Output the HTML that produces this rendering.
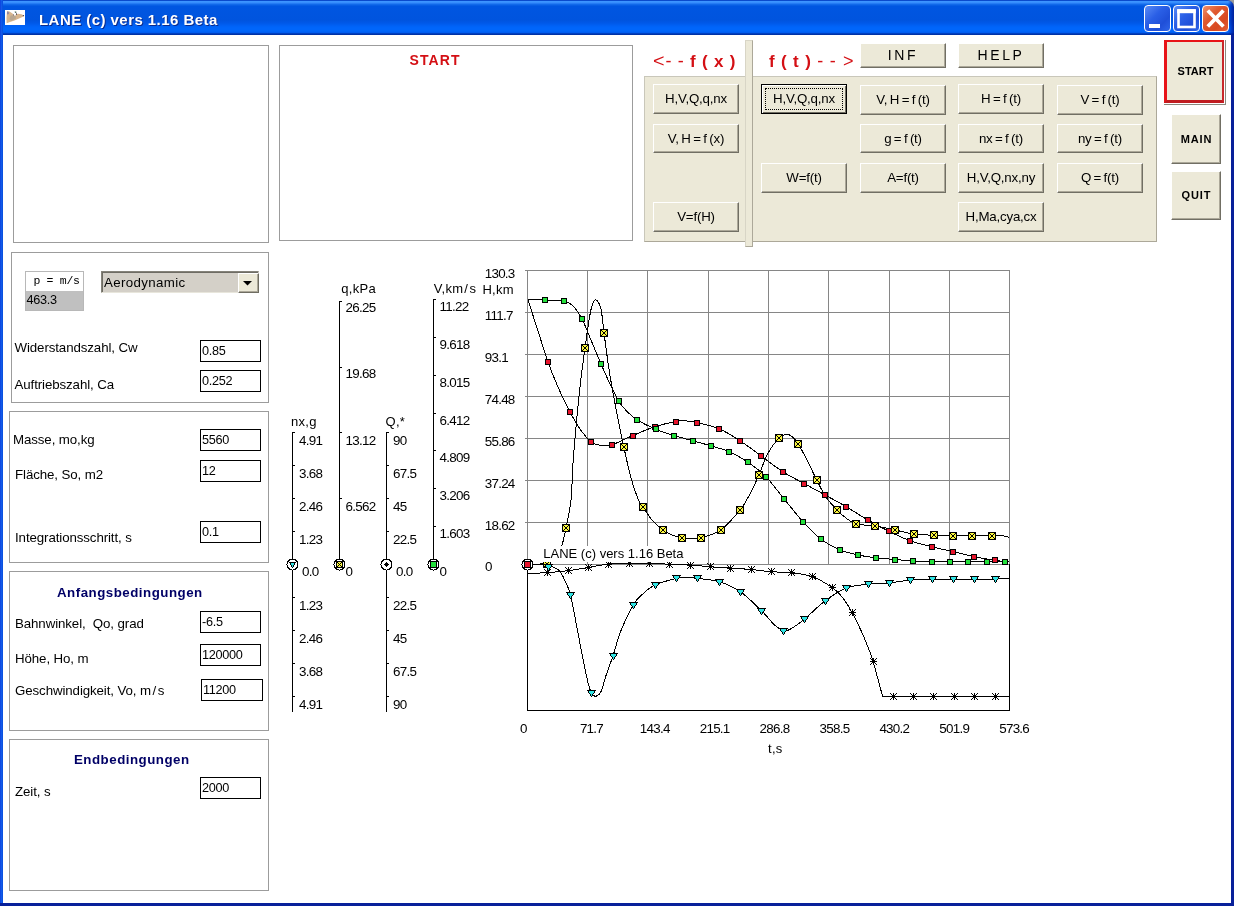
<!DOCTYPE html>
<html><head><meta charset="utf-8"><title>LANE</title>
<style>
html,body{margin:0;padding:0}
body{width:1234px;height:906px;position:relative;overflow:hidden;background:#fff;font-family:"Liberation Sans",sans-serif;font-size:13px;color:#000}
div{position:absolute;box-sizing:border-box;white-space:nowrap}
#frame{left:0;top:0;width:1234px;height:906px;background:#08209a}
#frameL{left:0;top:0;width:3px;height:903px;background:linear-gradient(90deg,#0831d9 0,#1660ea 1px,#0d55e4 2px,#0a4cdc 3px)}
#client{left:3px;top:35px;width:1228px;height:868px;background:#fff}
#title{left:0;top:0;width:1234px;height:35px;border-radius:0 7px 0 0;background:linear-gradient(90deg,rgba(0,20,150,0) 1228px,rgba(0,20,150,.6) 1232px,rgba(0,16,130,.75) 1234px),linear-gradient(180deg,#0a4acc 0,#0a4acc 1px,#3c94ff 1px,#3c94ff 2px,#3288fa 3px,#1870ee 4px,#0a62e6 5px,#0056e1 6.5px,#0054de 20px,#0058e8 23px,#0062f6 26px,#0066fb 28px,#0066fb 31px,#005cf0 32.5px,#0040c0 33.5px,#002a9a 35px)}
#ttext{left:39px;top:9px;color:#fff;font-weight:bold;font-size:15px;line-height:22px;letter-spacing:0.45px;text-shadow:1px 1px 0 #0a2a8c}
#icon{left:5px;top:10px;width:20px;height:15px;background:#fff}
.cb{top:5px;width:27px;height:27px;border:1px solid #fff;border-radius:4px;background:linear-gradient(135deg,#5b8cf5 0,#2a5fe6 40%,#1f4fd8 70%,#2f66ea 100%)}
.pnl{border:1px solid #9c9c9c;background:#fff}
.gp{background:#ece9d8;border:1px solid #c9c7ba;border-right-color:#aca899;border-bottom-color:#aca899}
.b{background:#ece9d8;border:1px solid #fff;border-right:1px solid #716f64;border-bottom:1px solid #716f64;text-align:center;font-size:13.3px;letter-spacing:-0.2px;word-spacing:-1px;box-shadow:inset -1px -1px 0 #aca899}
.sp{letter-spacing:2.6px;font-size:14px}
.rb{background:#ece9d8;border:1px solid #fff;border-right:1px solid #716f64;border-bottom:1px solid #716f64;text-align:center;font-weight:bold;font-size:11px;letter-spacing:0.9px;padding-left:1px;box-shadow:inset -1px -1px 0 #aca899}
.hd{color:#d40f14;font-size:18px;letter-spacing:5.2px;line-height:20px}
.hd b{font-weight:bold;font-size:17px}
.hd i{font-style:normal;display:inline-block;width:12.5px;letter-spacing:0;transform:scaleX(1.1);transform-origin:0 50%}
.hd u{text-decoration:none;display:inline-block;margin-left:1px}
.l{font-size:13.3px;line-height:15px;letter-spacing:-0.1px}
.in{border:1px solid #000;background:#fff;width:61px;height:22px;font-size:12.7px;line-height:15px;letter-spacing:-0.3px;padding:3px 0 0 1px}
.h2{font-weight:bold;color:#000066;font-size:13.3px;line-height:15px;letter-spacing:0.5px}
.ct{font-size:13.4px;line-height:15px;letter-spacing:-0.72px}
.cap{font-size:13px;line-height:15px}
.tl{font-size:13px;line-height:15px;letter-spacing:0.3px}
</style></head><body>
<div id="wrap" style="left:0;top:0;width:1234px;height:906px;will-change:transform">
<div id="frame"></div>
<div style="left:1224px;top:0;width:10px;height:10px;background:#9a9a9a"></div>
<div id="title"></div>
<div id="frameL"></div>
<div id="client"></div>
<div id="icon"><svg width="20" height="15" viewBox="0 0 20 15"><defs><filter id="bl" x="-10%" y="-10%" width="120%" height="120%"><feGaussianBlur stdDeviation="0.45"/></filter></defs><g filter="url(#bl)"><path d="M2 1.2L4.5 1.6 7.5 3.6 8.6 5 11 4.6 13 3.8 16.5 4.2 19 5.4 18.6 6.6 14 8.4 9.5 10.4 5 12 1.6 13.2 1.5 8z" fill="#d8b68e"/><path d="M5.5 5.5L10.5 5.2 11 8.5 6 11 4.5 9z" fill="#b9a790"/><path d="M2 1.4l1.6.3.4 2.2-2 .6z" fill="#8f86a6"/><path d="M8.6 3.2l2-.2.3 2.4-2.2.2z" fill="#fff"/><path d="M9.6 1.6l1.6-.2.4 1-1.6.5z" fill="#4c6a52"/><path d="M11 3.2l.9.1.1 1.5-.9.1z" fill="#4a3c48"/><path d="M8 4.2l.7 0 .1 1.2-.8 0z" fill="#5a4a52"/><circle cx="18.4" cy="5.6" r=".7" fill="#3e3a52"/></g></svg></div>
<div id="ttext">LANE (c) vers 1.16 Beta</div>
<div class="cb" style="left:1144px"><svg width="25" height="25"><rect x="4" y="18" width="11" height="4" fill="#fff"/></svg></div>
<div class="cb" style="left:1173px"><svg width="25" height="25"><rect x="4.5" y="4.5" width="16" height="16.5" fill="none" stroke="#fff" stroke-width="2.6"/><rect x="3.2" y="3.2" width="18.6" height="4" fill="#fff"/></svg></div>
<div class="cb" style="left:1202px;background:linear-gradient(135deg,#f0906a 0,#e05a30 35%,#d84820 70%,#e2603a 100%)"><svg width="25" height="25"><path d="M4.8 4.5l15.6 16M20.4 4.5l-15.6 16" stroke="#fff" stroke-width="3.8" fill="none"/></svg></div>

<!-- top panels -->
<div class="pnl" style="left:13px;top:45px;width:256px;height:198px"></div>
<div class="pnl" style="left:279px;top:45px;width:354px;height:196px"></div>
<div style="left:279px;top:52px;width:312px;text-align:center;color:#d40f14;font-weight:bold;font-size:14px;line-height:16px;letter-spacing:1.1px">START</div>

<!-- button panel -->
<div class="gp" style="left:644px;top:76px;width:513px;height:166px"></div>
<div style="left:745px;top:40px;width:8px;height:207px;background:#ece9d8;border:1px solid #d8d5c6;border-right-color:#aca899;border-bottom-color:#aca899"></div>
<div class="hd" style="left:653px;top:51px;letter-spacing:6.3px"><i>&lt;</i>--<b>f(x)</b></div>
<div class="hd" style="left:769px;top:51px;letter-spacing:6.4px"><b>f(t)</b>--<u>&gt;</u></div>
<div class="b" style="left:653px;top:84px;width:86px;height:30px;line-height:28px">H,V,Q,q,nx</div>
<div class="b" style="left:653px;top:124px;width:86px;height:29px;line-height:27px">V, H = f (x)</div>
<div class="b" style="left:653px;top:202px;width:86px;height:30px;line-height:28px">V=f(H)</div>
<div class="b" style="left:860px;top:85px;width:86px;height:30px;line-height:28px">V, H = f (t)</div>
<div class="b" style="left:958px;top:84px;width:86px;height:30px;line-height:28px">H = f (t)</div>
<div class="b" style="left:1057px;top:85px;width:86px;height:30px;line-height:28px">V = f (t)</div>
<div class="b" style="left:860px;top:124px;width:86px;height:29px;line-height:27px">g = f (t)</div>
<div class="b" style="left:958px;top:124px;width:86px;height:29px;line-height:27px">nx = f (t)</div>
<div class="b" style="left:1057px;top:124px;width:86px;height:29px;line-height:27px">ny = f (t)</div>
<div class="b" style="left:761px;top:163px;width:86px;height:30px;line-height:28px">W=f(t)</div>
<div class="b" style="left:860px;top:163px;width:86px;height:30px;line-height:28px">A=f(t)</div>
<div class="b" style="left:958px;top:163px;width:86px;height:30px;line-height:28px">H,V,Q,nx,ny</div>
<div class="b" style="left:1057px;top:163px;width:86px;height:30px;line-height:28px">Q = f(t)</div>
<div class="b" style="left:958px;top:202px;width:86px;height:30px;line-height:28px">H,Ma,cya,cx</div>
<div class="b sp" style="left:860px;top:43px;width:86px;height:25px;line-height:23px">INF</div>
<div class="b sp" style="left:958px;top:43px;width:86px;height:25px;line-height:23px">HELP</div>
<div class="b" style="left:761px;top:84px;width:86px;height:30px;line-height:27px;border:1px solid #000;box-shadow:inset 1px 1px 0 #fff,inset -1px -1px 0 #6f6d62;outline:0">H,V,Q,q,nx<div style="left:3px;top:3px;width:78px;height:22px;border:1px dotted #000"></div></div>

<!-- right buttons -->
<div style="left:1164px;top:40px;width:62px;height:65px;border-right:1px solid #8a887c;border-bottom:1px solid #8a887c"></div>
<div style="left:1164px;top:40px;width:60px;height:63px;background:#ece9d8;border:solid #e81418;border-width:2px 2px 3px 3px;border-right-color:#c8282a;border-bottom-color:#c01c20;text-align:center;font-weight:bold;font-size:11px;letter-spacing:0;padding-left:2px;line-height:59px">START</div>
<div class="rb" style="left:1171px;top:114px;width:50px;height:50px;line-height:48px">MAIN</div>
<div class="rb" style="left:1171px;top:171px;width:50px;height:49px;line-height:47px">QUIT</div>

<!-- left panels -->
<div class="pnl" style="left:11px;top:252px;width:258px;height:151px"></div>
<div class="pnl" style="left:9px;top:411px;width:260px;height:152px"></div>
<div class="pnl" style="left:9px;top:571px;width:260px;height:160px"></div>
<div class="pnl" style="left:9px;top:739px;width:260px;height:152px"></div>

<div style="left:25px;top:271px;width:59px;height:40px;border:1px solid #b8b8b8;background:#fff"></div>
<div style="left:26px;top:291px;width:57px;height:19px;background:#c0c0c0"></div>
<div style="left:26px;top:274px;width:57px;text-align:center;font-family:'Liberation Mono',monospace;font-size:11.5px;line-height:14px;letter-spacing:-0.3px;padding-left:4px">p = m/s</div>
<div style="left:26.5px;top:293px;font-size:12.7px;line-height:15px;letter-spacing:-0.3px">463.3</div>

<div style="left:101px;top:271px;width:158px;height:22px;background:#d4d0c8;border:1px solid #85837a;border-right-color:#d4d0c8;border-bottom-color:#e8e6dc;box-shadow:inset 1px 1px 0 #6e6c64"></div>
<div style="left:104px;top:275px;font-size:13.3px;line-height:15px;letter-spacing:0.35px">Aerodynamic</div>
<div style="left:238px;top:273px;width:21px;height:20px;background:#ece9d8;border:1px solid #fff;border-right-color:#6f6d62;border-bottom-color:#6f6d62;box-shadow:inset -1px -1px 0 #aca899"><svg width="18" height="17"><path d="M4 7h9l-4.5 4.5z" fill="#000"/></svg></div>

<div class="l" style="left:14.5px;top:340px">Widerstandszahl, Cw</div>
<div class="in" style="left:200px;top:340px">0.85</div>
<div class="l" style="left:14.5px;top:377px">Auftriebszahl, Ca</div>
<div class="in" style="left:200px;top:370px">0.252</div>

<div class="l" style="left:13px;top:432px">Masse, mo,kg</div>
<div class="in" style="left:200px;top:429px">5560</div>
<div class="l" style="left:15px;top:467px">Fl&auml;che, So, m2</div>
<div class="in" style="left:200px;top:460px">12</div>
<div class="l" style="left:15px;top:530px">Integrationsschritt, s</div>
<div class="in" style="left:200px;top:521px">0.1</div>

<div class="h2" style="left:57px;top:585px">Anfangsbedingungen</div>
<div class="l" style="left:15px;top:616px">Bahnwinkel,&nbsp; Qo, grad</div>
<div class="in" style="left:200px;top:611px">-6.5</div>
<div class="l" style="left:15px;top:651px">H&ouml;he, Ho, m</div>
<div class="in" style="left:200px;top:644px">120000</div>
<div class="l" style="left:15px;top:683px">Geschwindigkeit, Vo, m<span style="padding:0 1.6px">/</span>s</div>
<div class="in" style="left:201px;top:679px;width:62px">11200</div>

<div class="h2" style="left:74px;top:752px">Endbedingungen</div>
<div class="l" style="left:15px;top:784px">Zeit, s</div>
<div class="in" style="left:200px;top:777px">2000</div>

<!-- chart -->
<svg width="1234" height="906" style="position:absolute;left:0;top:0" shape-rendering="crispEdges">
<defs>
<g id="r"><path d="M-3-3h6v6h-6z" fill="#000"/><path d="M-2-2h4v4h-4z" fill="#e8142c"/></g>
<g id="g"><path d="M-3-3h6v6h-6z" fill="#000"/><path d="M-2-2h4v4h-4z" fill="#24e03c"/></g>
<g id="r7"><path d="M-3-3h7v7h-7z" fill="#000"/><path d="M-2-2h5v5h-5z" fill="#e8142c"/></g>
<g id="g7"><path d="M-3-3h7v7h-7z" fill="#000"/><path d="M-2-2h5v5h-5z" fill="#24e03c"/></g>
<g id="y"><path d="M-4-4h8v8h-8z" fill="#000"/><path d="M-3-3h6v6h-6z" fill="#fbf73e"/><path d="M-3-3h1v1h-1zM-2-2h1v1h-1zM-1-1h1v1h-1zM0 0h1v1h-1zM1 1h1v1h-1zM2 2h1v1h-1zM2-3h1v1h-1zM1-2h1v1h-1zM0-1h1v1h-1zM-1 0h1v1h-1zM-2 1h1v1h-1zM-3 2h1v1h-1z" fill="#000"/></g>
<g id="y7"><path d="M-3-3h7v7h-7z" fill="#000"/><path d="M-2-2h5v5h-5z" fill="#fbf73e"/><path d="M-2-2h1v1h-1zM-1-1h1v1h-1zM0 0h1v1h-1zM1 1h1v1h-1zM2 2h1v1h-1zM2-2h1v1h-1zM1-1h1v1h-1zM-1 1h1v1h-1zM-2 2h1v1h-1z" fill="#000"/></g>
<g id="t"><path d="M-4-3h9v1h-9zM-3-2h1v2h-1zM3-2h1v2h-1zM-2 0h1v1h-1zM2 0h1v1h-1zM-1 1h1v2h-1zM1 1h1v2h-1zM0 3h1v1h-1z" fill="#000"/><path d="M-2-2h5v2h-5zM-1 0h3v1h-3zM0 1h1v2h-1z" fill="#30e4e4"/></g>
<g id="t7"><path d="M-3-2h7v1h-7zM-2-1h1v2h-1zM2-1h1v2h-1zM-1 1h1v2h-1zM1 1h1v2h-1zM0 3h1v1h-1z" fill="#000"/><path d="M-1-1h3v2h-3zM0 1h1v2h-1z" fill="#2ee0e0"/></g>
<g id="s"><path d="M0-3h1v7h-1zM-3 0h7v1h-7zM-1-1h3v3h-3zM-3-3h1v1h-1zM-2-2h1v1h-1zM2 2h1v1h-1zM3 3h1v1h-1zM3-3h1v1h-1zM2-2h1v1h-1zM-2 2h1v1h-1zM-3 3h1v1h-1z" fill="#000"/></g>
</defs>
<path d="M527.5 270V565M587.5 270V565M647.5 270V565M708.5 270V565M768.5 270V565M828.5 270V565M889.5 270V565M949.5 270V565M1009.5 270V565M525 270.5H1009M525 312.5H1009M525 354.5H1009M525 396.5H1009M525 438.5H1009M525 480.5H1009M525 522.5H1009M525 564.5H1009" stroke="#868686" fill="none"/>
<path d="M527.5 564V710.5H1009.5V564" stroke="#000" fill="none"/>
<path d="M292.5 432V712M292 432.5h3M292 465.5h3M292 498.5h3M292 531.5h3M292 597.5h3M292 630.5h3M292 663.5h3M292 696.5h3M339.5 301V564M339 301.5h3M339 367.5h3M339 432.5h3M339 498.5h3M386.5 432V712M386 432.5h3M386 465.5h3M386 498.5h3M386 531.5h3M386 597.5h3M386 630.5h3M386 663.5h3M386 696.5h3M433.5 299V564M433 299.5h3M433 337.5h3M433 375.5h3M433 413.5h3M433 450.5h3M433 488.5h3M433 526.5h3" stroke="#000" fill="none"/>
<path d="M528.0 300.0 C529.7 305.2 534.7 320.7 538.0 331.0 C541.3 341.3 544.7 352.7 548.0 362.0 C551.3 371.3 554.3 378.7 558.0 387.0 C561.7 395.3 566.3 405.0 570.0 412.0 C573.7 419.0 576.5 424.1 580.0 429.0 C583.5 433.9 587.5 438.9 591.0 441.6 C594.5 444.4 597.5 445.0 601.0 445.5 C604.5 446.0 606.7 446.5 612.0 444.8 C617.3 443.1 625.9 438.5 633.0 435.5 C640.1 432.5 647.4 429.1 654.6 426.8 C661.8 424.5 670.7 422.5 676.0 421.5 C681.3 420.5 683.0 420.8 686.5 421.0 C690.0 421.2 691.6 421.3 697.0 422.6 C702.4 423.9 711.8 425.7 719.0 428.7 C726.2 431.7 733.0 436.3 740.0 440.8 C747.0 445.3 753.8 450.6 761.0 455.8 C768.2 461.0 775.8 467.3 783.0 471.9 C790.2 476.5 797.0 479.7 804.0 483.5 C811.0 487.3 818.0 491.0 825.0 494.9 C832.0 498.8 838.9 502.5 846.0 506.6 C853.1 510.8 860.4 515.7 867.5 519.8 C874.6 523.9 881.6 527.7 888.7 531.2 C895.8 534.7 902.8 538.1 910.0 540.7 C917.2 543.3 924.9 545.0 932.0 546.8 C939.1 548.6 945.7 550.0 952.7 551.6 C959.7 553.2 967.0 555.2 974.0 556.6 C981.0 558.0 989.0 559.4 994.8 560.3 C1000.6 561.2 1006.6 561.7 1009.0 562.0" stroke="#000" fill="none"/>
<path d="M528.0 300.0 C530.8 300.0 539.0 299.9 545.0 300.0 C551.0 300.1 559.3 299.8 564.0 300.8 C568.7 301.8 570.0 303.0 573.0 306.0 C576.0 309.0 579.0 313.3 582.0 319.0 C585.0 324.7 587.8 332.5 591.0 340.0 C594.2 347.5 597.9 356.8 601.0 364.0 C604.1 371.2 606.6 376.8 609.5 383.0 C612.4 389.2 615.7 396.2 618.6 401.0 C621.5 405.8 623.9 408.4 627.0 411.5 C630.1 414.6 632.2 416.7 637.0 419.7 C641.8 422.7 649.8 426.8 656.0 429.4 C662.2 432.0 667.9 433.6 674.0 435.5 C680.1 437.4 686.5 439.1 692.7 440.8 C698.9 442.5 705.0 444.1 711.0 445.9 C717.0 447.7 722.9 449.0 729.0 451.7 C735.1 454.4 741.7 457.9 747.8 462.0 C753.9 466.1 759.8 470.5 765.8 476.6 C771.8 482.7 777.6 491.0 783.8 498.5 C790.0 506.0 796.8 515.0 802.9 521.7 C809.0 528.4 814.5 534.2 820.6 538.9 C826.7 543.6 833.5 547.0 839.7 549.7 C845.9 552.4 852.0 553.7 858.0 555.0 C864.0 556.3 869.6 557.0 875.7 557.7 C881.8 558.5 888.6 559.0 894.8 559.5 C901.0 560.0 906.6 560.5 912.8 560.9 C919.0 561.3 925.6 561.7 931.8 561.9 C938.0 562.1 943.8 561.9 949.8 561.9 C955.8 561.9 961.6 561.9 967.8 561.9 C974.0 561.9 980.7 561.9 986.9 561.9 C993.1 561.9 1001.2 561.9 1004.9 561.9 C1008.6 561.9 1008.3 562.0 1009.0 562.0" stroke="#000" fill="none"/>
<path d="M528.0 564.0 C531.1 563.9 541.8 564.5 546.5 563.5 C551.2 562.5 553.4 561.1 556.0 558.0 C558.6 554.9 560.3 550.0 562.0 545.0 C563.7 540.0 564.5 535.5 566.0 528.0 C567.5 520.5 569.8 512.0 571.0 500.0 C572.2 488.0 572.1 473.9 573.5 456.0 C574.9 438.1 577.5 410.4 579.4 392.4 C581.3 374.4 583.3 360.4 585.0 348.0 C586.7 335.6 588.1 325.3 589.4 318.0 C590.6 310.7 591.5 307.1 592.5 304.0 C593.5 300.9 594.5 299.9 595.5 299.7 C596.5 299.4 597.5 300.7 598.5 302.5 C599.5 304.3 600.4 305.2 601.3 310.3 C602.2 315.4 602.7 322.7 604.0 332.8 C605.3 342.9 607.3 358.6 609.3 371.2 C611.3 383.8 613.5 395.7 615.9 408.3 C618.3 420.9 621.3 435.4 623.8 447.0 C626.3 458.6 628.6 469.2 631.0 478.0 C633.4 486.8 636.4 495.1 638.4 500.0 C640.4 504.9 640.9 503.9 643.2 507.2 C645.5 510.5 648.7 516.2 652.0 520.0 C655.3 523.8 659.5 527.5 662.8 530.0 C666.1 532.5 668.8 533.7 672.0 535.0 C675.2 536.3 678.6 537.3 681.8 537.9 C685.0 538.5 687.8 538.6 691.0 538.6 C694.2 538.6 695.9 539.3 700.9 537.9 C705.9 536.5 714.2 534.6 720.7 530.0 C727.2 525.4 735.1 516.0 740.0 510.0 C744.9 504.0 746.9 499.8 750.0 494.0 C753.1 488.2 755.9 481.8 758.9 475.0 C761.9 468.2 764.6 459.2 768.0 453.0 C771.4 446.8 776.0 441.1 779.0 438.0 C782.0 434.9 783.8 434.6 786.0 434.3 C788.2 434.1 790.0 434.9 792.0 436.5 C794.0 438.1 795.4 439.6 798.1 443.8 C800.8 448.1 804.9 455.9 808.0 462.0 C811.1 468.1 813.9 474.6 816.9 480.4 C819.9 486.2 822.6 492.1 826.0 497.0 C829.4 501.9 833.7 506.5 837.0 510.0 C840.3 513.5 842.8 515.7 846.0 518.0 C849.2 520.3 851.3 522.7 856.1 524.0 C860.9 525.3 868.5 524.9 874.9 525.9 C881.3 526.9 888.3 528.5 894.8 529.9 C901.3 531.3 907.3 533.2 913.8 534.1 C920.3 535.0 927.1 534.9 933.7 535.2 C940.3 535.5 946.9 535.6 953.3 535.7 C959.7 535.8 965.6 535.7 972.1 535.7 C978.6 535.7 987.1 535.7 992.2 535.7 C997.4 535.7 1000.2 535.6 1003.0 535.9 C1005.8 536.2 1008.0 537.1 1009.0 537.3" stroke="#000" fill="none"/>
<path d="M528.0 564.0 C530.0 564.0 536.6 564.0 540.0 564.3 C543.4 564.6 545.9 565.1 548.4 565.7 C550.9 566.3 553.0 567.0 555.0 568.0 C557.0 569.0 558.3 569.0 560.3 571.8 C562.3 574.6 565.2 581.1 566.9 585.0 C568.6 588.9 569.3 589.7 570.6 595.0 C571.9 600.3 573.1 607.4 574.9 616.8 C576.7 626.2 579.3 640.2 581.5 651.2 C583.7 662.2 586.4 676.1 588.1 683.0 C589.8 689.9 590.2 690.6 591.5 692.8 C592.8 695.0 594.4 696.5 596.0 696.2 C597.6 695.9 599.8 694.0 601.3 690.9 C602.8 687.8 603.3 683.6 605.3 677.7 C607.2 671.8 610.4 663.7 613.0 655.7 C615.6 647.8 617.8 638.5 621.2 630.0 C624.6 621.5 629.9 610.6 633.4 604.6 C636.9 598.6 638.8 597.6 642.4 594.3 C646.0 591.0 649.4 587.6 655.0 585.0 C660.6 582.4 671.0 579.7 676.3 578.4 C681.6 577.1 683.5 577.4 687.0 577.4 C690.5 577.4 692.1 577.7 697.5 578.4 C702.9 579.1 712.2 579.5 719.4 581.8 C726.6 584.0 733.5 587.0 740.6 591.9 C747.7 596.8 756.2 605.6 761.8 611.0 C767.4 616.4 770.4 621.2 774.0 624.5 C777.6 627.8 780.6 629.7 783.3 630.5 C786.0 631.3 786.5 631.2 790.0 629.3 C793.5 627.4 798.6 623.9 804.5 619.1 C810.4 614.3 818.4 605.8 825.4 600.6 C832.4 595.4 839.5 590.6 846.6 587.9 C853.8 585.2 861.2 585.1 868.3 584.2 C875.4 583.4 882.2 583.5 889.2 582.8 C896.2 582.1 903.4 580.8 910.6 580.2 C917.8 579.6 925.3 579.3 932.4 579.1 C939.5 578.9 946.3 579.1 953.3 579.1 C960.3 579.1 967.2 579.1 974.2 579.1 C981.2 579.1 989.6 579.2 995.4 579.1 C1001.2 579.0 1006.7 578.6 1009.0 578.5" stroke="#000" fill="none"/>
<path d="M527.0 573.5 C530.4 573.4 540.5 573.1 547.4 572.6 C554.3 572.1 561.4 571.5 568.3 570.6 C575.2 569.8 581.9 568.6 588.6 567.5 C595.3 566.4 601.6 564.7 608.3 564.0 C615.0 563.3 622.1 563.5 629.0 563.4 C635.9 563.3 642.8 563.3 649.5 563.4 C656.2 563.5 662.2 563.9 669.0 564.2 C675.8 564.5 683.4 564.6 690.3 565.0 C697.2 565.4 703.7 566.3 710.4 566.8 C717.1 567.3 723.5 567.6 730.3 568.1 C737.1 568.6 744.2 568.9 751.0 569.5 C757.8 570.1 764.4 571.2 771.1 571.7 C777.8 572.2 784.3 572.0 791.2 572.8 C798.1 573.6 805.5 574.2 812.4 576.7 C819.2 579.2 827.3 584.2 832.3 587.6 C837.2 591.0 838.8 592.8 842.1 597.0 C845.4 601.2 848.9 606.8 852.2 612.8 C855.5 618.8 859.3 626.7 862.0 632.7 C864.7 638.7 866.8 643.8 868.6 648.6 C870.5 653.4 872.4 659.2 873.1 661.3" stroke="#000" fill="none"/>
<path d="M873.1 661.3 L882.6 696.3 L1009.0 696.8" stroke="#000" fill="none"/>
<use href="#y" x="547" y="564"/><use href="#y" x="566" y="528"/><use href="#y" x="585" y="348"/><use href="#y" x="604" y="333"/><use href="#y" x="624" y="447"/><use href="#y" x="643" y="507"/><use href="#y" x="663" y="530"/><use href="#y" x="682" y="538"/><use href="#y" x="701" y="538"/><use href="#y" x="721" y="530"/><use href="#y" x="740" y="510"/><use href="#y" x="759" y="475"/><use href="#y" x="779" y="438"/><use href="#y" x="798" y="444"/><use href="#y" x="817" y="480"/><use href="#y" x="837" y="510"/><use href="#y" x="856" y="524"/><use href="#y" x="875" y="526"/><use href="#y" x="895" y="530"/><use href="#y" x="914" y="534"/><use href="#y" x="934" y="535"/><use href="#y" x="953" y="536"/><use href="#y" x="972" y="536"/><use href="#y" x="992" y="536"/><use href="#r" x="548" y="362"/><use href="#r" x="570" y="412"/><use href="#r" x="591" y="442"/><use href="#r" x="612" y="445"/><use href="#r" x="633" y="436"/><use href="#r" x="655" y="427"/><use href="#r" x="676" y="422"/><use href="#r" x="697" y="423"/><use href="#r" x="719" y="429"/><use href="#r" x="740" y="441"/><use href="#r" x="761" y="456"/><use href="#r" x="783" y="472"/><use href="#r" x="804" y="484"/><use href="#r" x="825" y="495"/><use href="#r" x="846" y="507"/><use href="#r" x="868" y="520"/><use href="#r" x="889" y="531"/><use href="#r" x="910" y="541"/><use href="#r" x="932" y="547"/><use href="#r" x="953" y="552"/><use href="#r" x="974" y="557"/><use href="#r" x="995" y="560"/><use href="#g" x="545" y="300"/><use href="#g" x="564" y="301"/><use href="#g" x="582" y="319"/><use href="#g" x="601" y="364"/><use href="#g" x="619" y="401"/><use href="#g" x="637" y="420"/><use href="#g" x="656" y="429"/><use href="#g" x="674" y="436"/><use href="#g" x="693" y="441"/><use href="#g" x="711" y="446"/><use href="#g" x="729" y="452"/><use href="#g" x="748" y="462"/><use href="#g" x="766" y="477"/><use href="#g" x="784" y="499"/><use href="#g" x="803" y="522"/><use href="#g" x="821" y="539"/><use href="#g" x="840" y="550"/><use href="#g" x="858" y="555"/><use href="#g" x="876" y="558"/><use href="#g" x="895" y="560"/><use href="#g" x="913" y="561"/><use href="#g" x="932" y="562"/><use href="#g" x="950" y="562"/><use href="#g" x="968" y="562"/><use href="#g" x="987" y="562"/><use href="#g" x="1005" y="562"/><use href="#s" x="547" y="572"/><use href="#s" x="568" y="570"/><use href="#s" x="588" y="567"/><use href="#s" x="608" y="564"/><use href="#s" x="629" y="563"/><use href="#s" x="649" y="563"/><use href="#s" x="669" y="564"/><use href="#s" x="690" y="565"/><use href="#s" x="710" y="566"/><use href="#s" x="730" y="568"/><use href="#s" x="751" y="569"/><use href="#s" x="771" y="571"/><use href="#s" x="791" y="572"/><use href="#s" x="812" y="576"/><use href="#s" x="832" y="587"/><use href="#s" x="852" y="612"/><use href="#s" x="873" y="661"/><use href="#s" x="893" y="696"/><use href="#s" x="913" y="696"/><use href="#s" x="933" y="696"/><use href="#s" x="954" y="696"/><use href="#s" x="974" y="696"/><use href="#s" x="995" y="696"/><use href="#t" x="548" y="567"/><use href="#t" x="570" y="595"/><use href="#t" x="591" y="693"/><use href="#t" x="613" y="656"/><use href="#t" x="633" y="605"/><use href="#t" x="655" y="585"/><use href="#t" x="676" y="578"/><use href="#t" x="697" y="578"/><use href="#t" x="719" y="582"/><use href="#t" x="740" y="592"/><use href="#t" x="761" y="611"/><use href="#t" x="783" y="631"/><use href="#t" x="804" y="619"/><use href="#t" x="825" y="601"/><use href="#t" x="846" y="588"/><use href="#t" x="868" y="584"/><use href="#t" x="889" y="583"/><use href="#t" x="910" y="580"/><use href="#t" x="932" y="579"/><use href="#t" x="953" y="579"/><use href="#t" x="974" y="579"/><use href="#t" x="995" y="579"/>
<circle cx="292.5" cy="564.5" r="5.5" fill="#fff" stroke="#000"/><use href="#t7" x="292" y="564"/><circle cx="339.5" cy="564.5" r="5.5" fill="#fff" stroke="#000"/><use href="#y7" x="339" y="564"/><circle cx="386.5" cy="564.5" r="5.5" fill="#fff" stroke="#000"/><path d="M386 562h1v5h-1zM384 564h5v1h-5zM385 563h3v3h-3z" fill="#000"/><circle cx="433.5" cy="564.5" r="5.5" fill="#fff" stroke="#000"/><use href="#g7" x="433" y="564"/><circle cx="527.5" cy="564.5" r="5.5" fill="#fff" stroke="#000"/><use href="#r7" x="527" y="564"/>
</svg>
<div class="tl" style="left:291px;top:413.5px">nx,g</div>
<div class="ct" style="left:299px;top:432.5px">4.91</div>
<div class="ct" style="left:299px;top:465.5px">3.68</div>
<div class="ct" style="left:299px;top:498.5px">2.46</div>
<div class="ct" style="left:299px;top:531.5px">1.23</div>
<div class="ct" style="left:299px;top:597.5px">1.23</div>
<div class="ct" style="left:299px;top:630.5px">2.46</div>
<div class="ct" style="left:299px;top:663.5px">3.68</div>
<div class="ct" style="left:299px;top:696.5px">4.91</div>
<div class="ct" style="left:302px;top:564px">0.0</div>
<div class="tl" style="left:341.3px;top:281px">q,kPa</div>
<div class="ct" style="left:345.5px;top:300px">26.25</div>
<div class="ct" style="left:345.5px;top:366px">19.68</div>
<div class="ct" style="left:345.5px;top:432.5px">13.12</div>
<div class="ct" style="left:345.5px;top:498.5px">6.562</div>
<div class="ct" style="left:345.5px;top:564px">0</div>
<div class="tl" style="left:385.5px;top:413.5px">Q,*</div>
<div class="ct" style="left:393px;top:432.5px">90</div>
<div class="ct" style="left:393px;top:465.5px">67.5</div>
<div class="ct" style="left:393px;top:498.5px">45</div>
<div class="ct" style="left:393px;top:531.5px">22.5</div>
<div class="ct" style="left:393px;top:597.5px">22.5</div>
<div class="ct" style="left:393px;top:630.5px">45</div>
<div class="ct" style="left:393px;top:663.5px">67.5</div>
<div class="ct" style="left:393px;top:696.5px">90</div>
<div class="ct" style="left:396px;top:564px">0.0</div>
<div class="tl" style="left:433.7px;top:281px">V,km<span style="letter-spacing:1.5px;margin-left:1px">/</span>s</div>
<div class="ct" style="left:439.5px;top:298.8px">11.22</div>
<div class="ct" style="left:439.5px;top:336.7px">9.618</div>
<div class="ct" style="left:439.5px;top:374.6px">8.015</div>
<div class="ct" style="left:439.5px;top:412.5px">6.412</div>
<div class="ct" style="left:439.5px;top:450.4px">4.809</div>
<div class="ct" style="left:439.5px;top:488.3px">3.206</div>
<div class="ct" style="left:439.5px;top:526.2px">1.603</div>
<div class="ct" style="left:439.5px;top:564px">0</div>
<div class="tl" style="left:482.4px;top:282.4px">H,km</div>
<div class="ct" style="left:484.7px;top:265.7px">130.3</div>
<div class="ct" style="left:484.7px;top:307.7px">111.7</div>
<div class="ct" style="left:484.7px;top:349.7px">93.1</div>
<div class="ct" style="left:484.7px;top:391.7px">74.48</div>
<div class="ct" style="left:484.7px;top:433.7px">55.86</div>
<div class="ct" style="left:484.7px;top:475.7px">37.24</div>
<div class="ct" style="left:484.7px;top:517.7px">18.62</div>
<div class="ct" style="left:485px;top:559px">0</div>
<div class="ct" style="left:520px;top:720.5px">0</div>
<div class="ct" style="left:579.9px;top:720.5px">71.7</div>
<div class="ct" style="left:639.8px;top:720.5px">143.4</div>
<div class="ct" style="left:699.7px;top:720.5px">215.1</div>
<div class="ct" style="left:759.6px;top:720.5px">286.8</div>
<div class="ct" style="left:819.5px;top:720.5px">358.5</div>
<div class="ct" style="left:879.4px;top:720.5px">430.2</div>
<div class="ct" style="left:939.3px;top:720.5px">501.9</div>
<div class="ct" style="left:999.2px;top:720.5px">573.6</div>
<div class="tl" style="left:768px;top:741.2px">t,s</div>
<div class="cap" style="left:542px;top:546px;width:142px;height:16px;background:#fff;padding-left:1.3px">LANE (c) vers 1.16 Beta</div>
</div>
</body></html>
